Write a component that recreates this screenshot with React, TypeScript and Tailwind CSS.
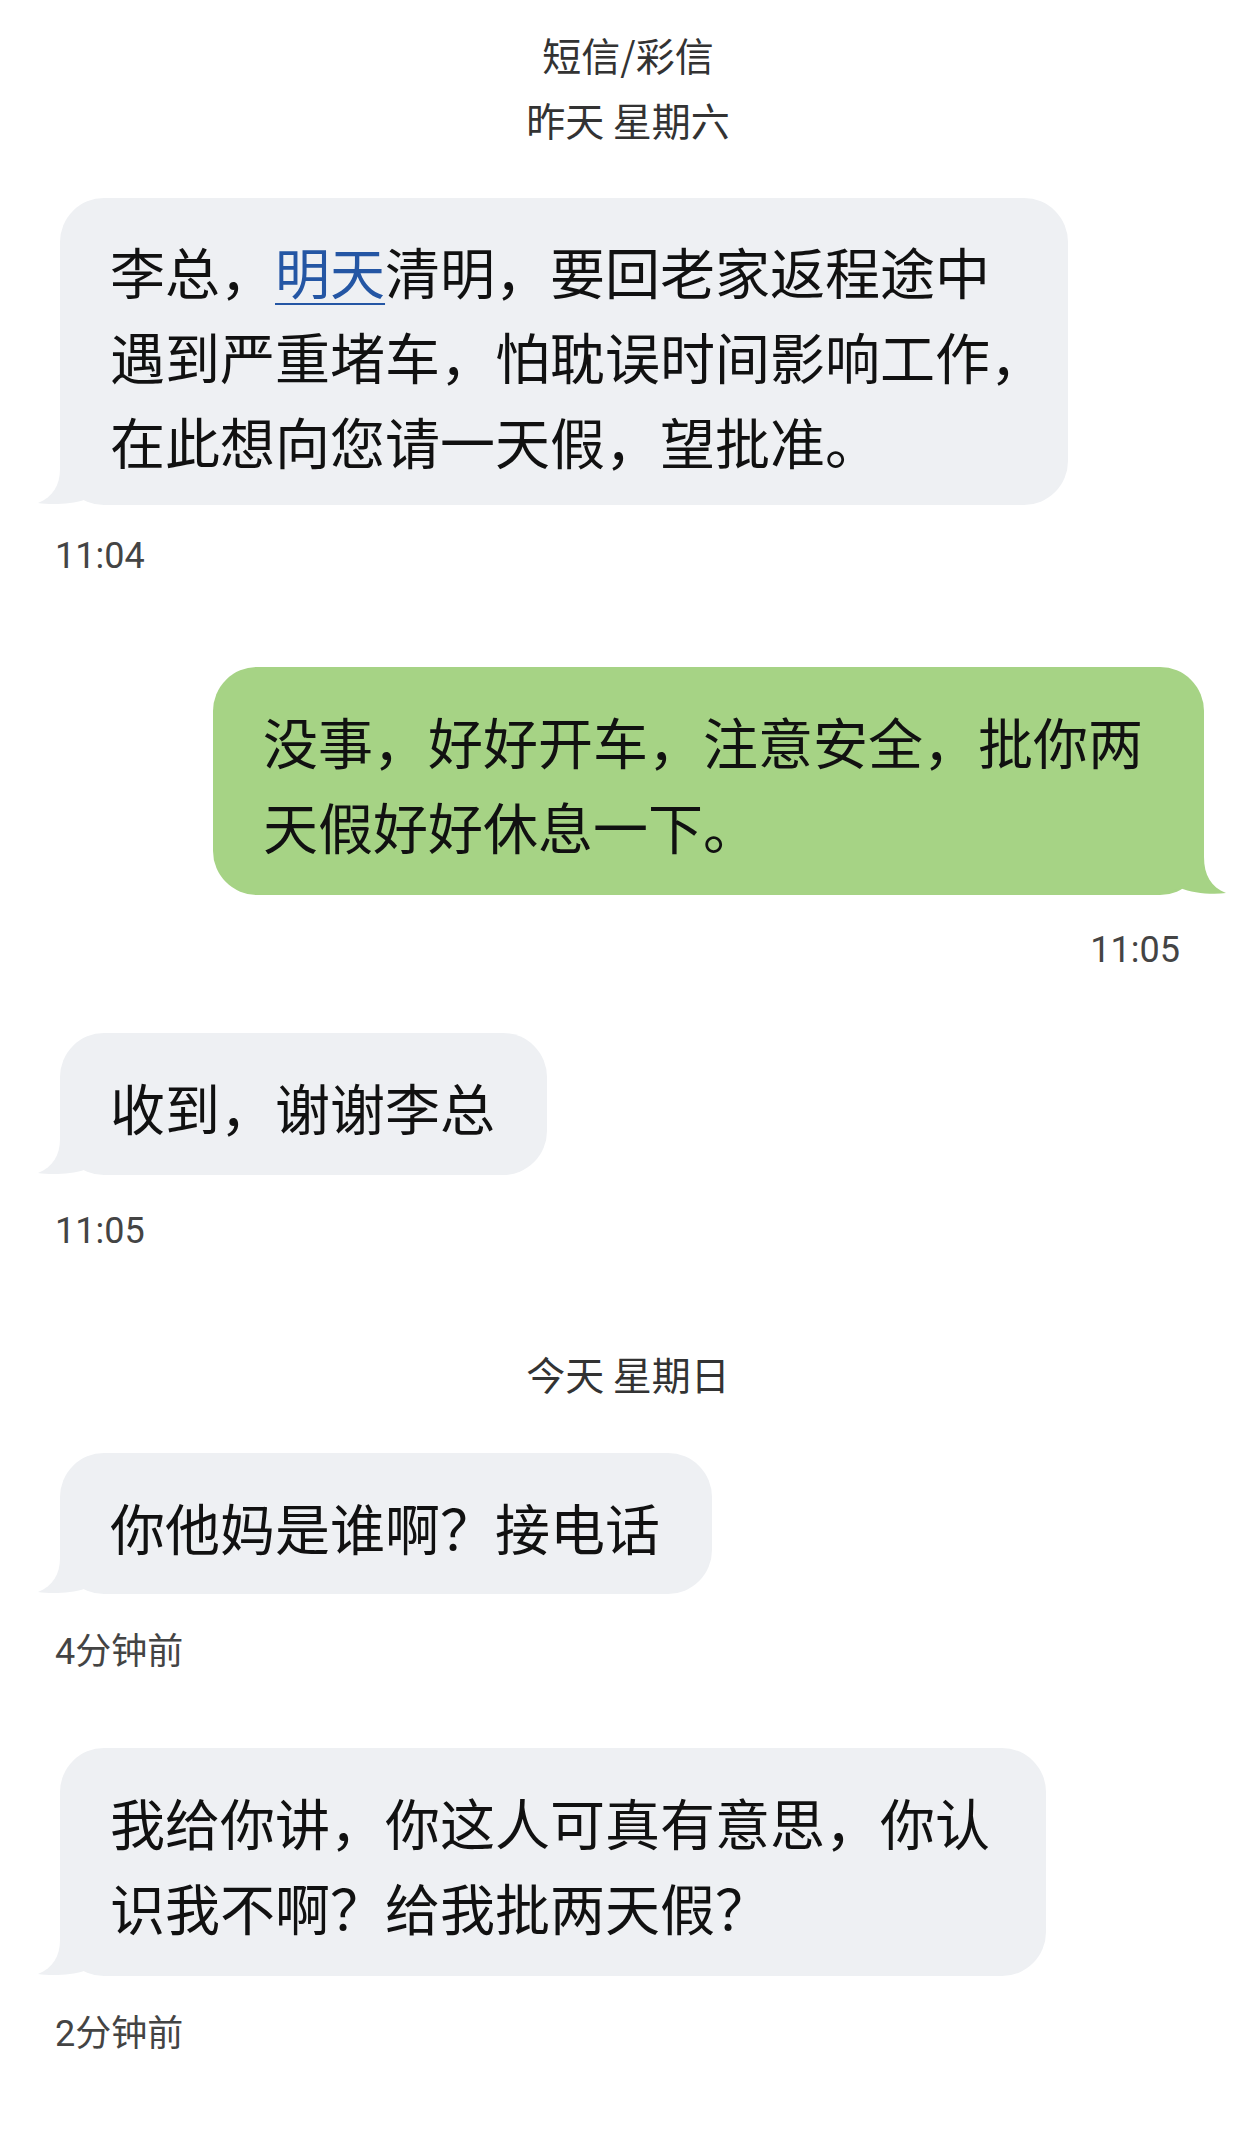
import React from "react";

const CJK = "font-['Noto_Sans_CJK_SC',sans-serif]";

function LeftTail() {
  return (
    <svg
      className="absolute left-[-22px] bottom-0"
      width="70"
      height="50"
      viewBox="0 0 70 50"
    >
      <path
        d="M22 0 L22 14 C22 30 15 42 0 48 C14 50 34 49 46 45 L70 50 L70 0 Z"
        fill="#eef0f3"
      />
    </svg>
  );
}

function RightTail() {
  return (
    <svg
      className="absolute right-[-22px] bottom-0"
      width="70"
      height="50"
      viewBox="0 0 70 50"
    >
      <path
        d="M48 0 L48 12 C48 30 55 42 70 48 C56 50 36 48 24 43 L0 50 L0 0 Z"
        fill="#a6d385"
      />
    </svg>
  );
}

function DayHeader({ children }: { children: React.ReactNode }) {
  return (
    <div className={`h-[65px] leading-[65px] text-center text-[39px] text-[#333] ${CJK}`}>
      {children}
    </div>
  );
}

function Stamp({ children, right }: { children: React.ReactNode; right?: boolean }) {
  return (
    <div
      className={`h-[40px] leading-[40px] text-[36px] text-[#444] font-['Roboto','Noto_Sans_CJK_SC',sans-serif] ${
        right ? "text-right pr-[76px]" : "pl-[55px]"
      }`}
    >
      {children}
    </div>
  );
}

export default function App() {
  return (
    <div className="w-[1256px] min-h-[2137px] bg-white overflow-hidden flex flex-col">
      <div className="pt-[22px]">
        <DayHeader>短信/彩信</DayHeader>
        <DayHeader>昨天 星期六</DayHeader>
      </div>

      {/* Bubble 1 */}
      <div className="mt-[46px] ml-[60px] w-[1008px] relative rounded-[44px] bg-[#eef0f3]">
        <LeftTail />
        <div
          className={`relative pl-[50px] pt-[30px] pb-[22px] text-[55px] leading-[85px] text-[#111] whitespace-nowrap ${CJK}`}
        >
          <div>
            李总，
            <span className="text-[#2456a4] underline decoration-[2px] underline-offset-[9px]">明天</span>
            清明，要回老家返程途中
          </div>
          <div>遇到严重堵车，怕耽误时间影响工作，</div>
          <div>在此想向您请一天假，望批准。</div>
        </div>
      </div>
      <div className="mt-[31px]">
        <Stamp>11:04</Stamp>
      </div>

      {/* Bubble 2 (green, outgoing) */}
      <div className="mt-[91px] ml-[213px] w-[991px] relative rounded-[44px] bg-[#a6d385]">
        <RightTail />
        <div
          className={`relative pl-[50px] pt-[31px] pb-[27px] text-[55px] leading-[85px] text-[#111] whitespace-nowrap ${CJK}`}
        >
          <div>没事，好好开车，注意安全，批你两</div>
          <div>天假好好休息一下。</div>
        </div>
      </div>
      <div className="mt-[35px]">
        <Stamp right>11:05</Stamp>
      </div>

      {/* Bubble 3 */}
      <div className="mt-[63px] ml-[60px] w-[487px] relative rounded-[44px] bg-[#eef0f3]">
        <LeftTail />
        <div
          className={`relative pl-[50px] pt-[31px] pb-[26px] text-[55px] leading-[85px] text-[#111] whitespace-nowrap ${CJK}`}
        >
          <div>收到，谢谢李总</div>
        </div>
      </div>
      <div className="mt-[36px]">
        <Stamp>11:05</Stamp>
      </div>

      <div className="mt-[90px]">
        <DayHeader>今天 星期日</DayHeader>
      </div>

      {/* Bubble 4 */}
      <div className="mt-[47px] ml-[60px] w-[652px] relative rounded-[44px] bg-[#eef0f3]">
        <LeftTail />
        <div
          className={`relative pl-[50px] pt-[31px] pb-[25px] text-[55px] leading-[85px] text-[#111] whitespace-nowrap ${CJK}`}
        >
          <div>你他妈是谁啊？接电话</div>
        </div>
      </div>
      <div className="mt-[38px]">
        <Stamp>4分钟前</Stamp>
      </div>

      {/* Bubble 5 */}
      <div className="mt-[76px] ml-[60px] w-[986px] relative rounded-[44px] bg-[#eef0f3]">
        <LeftTail />
        <div
          className={`relative pl-[50px] pt-[31px] pb-[27px] text-[55px] leading-[85px] text-[#111] whitespace-nowrap ${CJK}`}
        >
          <div>我给你讲，你这人可真有意思，你认</div>
          <div>识我不啊？给我批两天假？</div>
        </div>
      </div>
      <div className="mt-[38px]">
        <Stamp>2分钟前</Stamp>
      </div>
    </div>
  );
}
